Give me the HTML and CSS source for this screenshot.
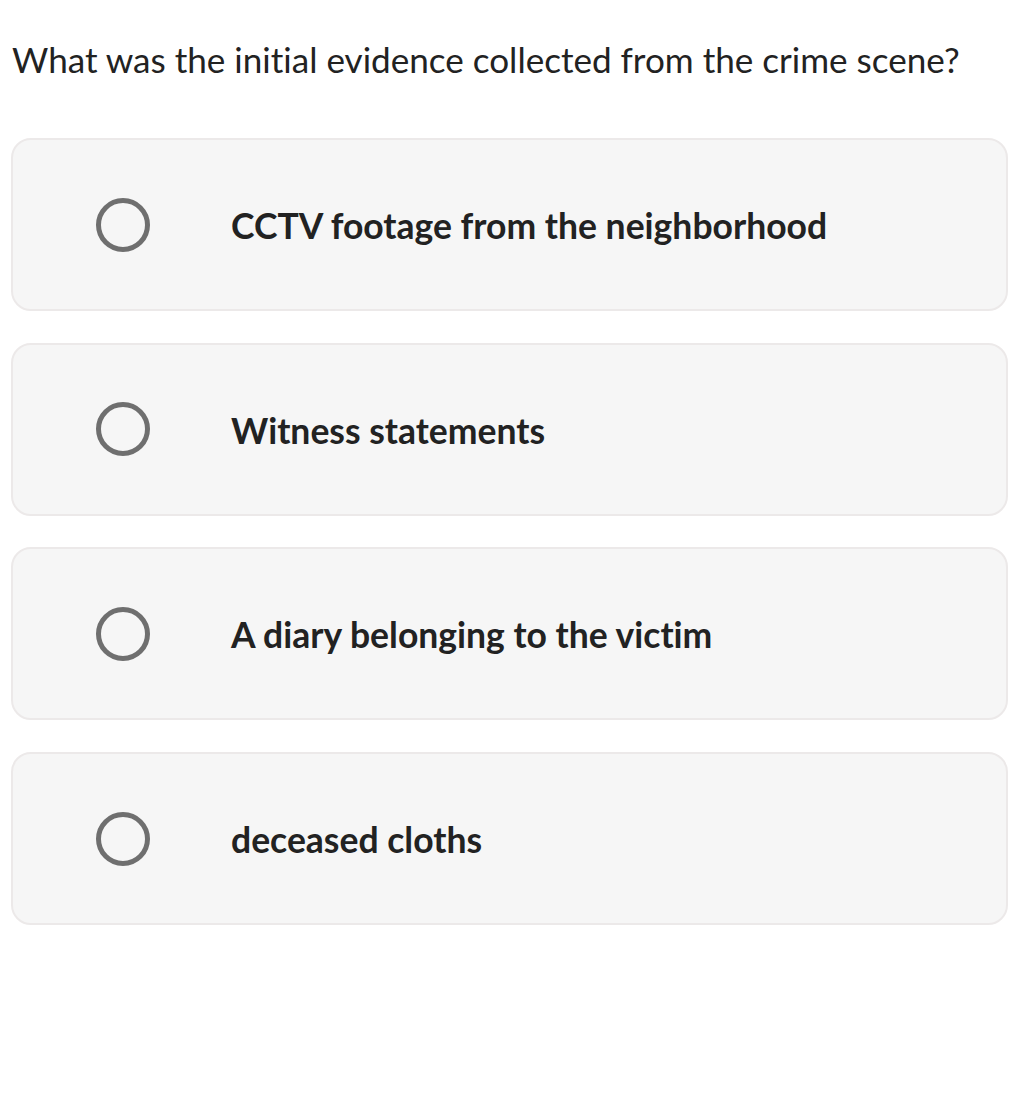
FILE: index.html
```html
<!DOCTYPE html>
<html lang="en">
<head>
  <meta charset="UTF-8">
  <title>Question</title>
  <link rel="stylesheet" href="styles.css">
</head>
<body>
  <main class="quiz">
    <h1 class="question">What was the initial evidence collected from the crime scene?</h1>

    <div class="options">
      <label class="option">
        <span class="radio"></span>
        <span class="option-text">CCTV footage from the neighborhood</span>
      </label>
      <label class="option">
        <span class="radio"></span>
        <span class="option-text">Witness statements</span>
      </label>
      <label class="option">
        <span class="radio"></span>
        <span class="option-text">A diary belonging to the victim</span>
      </label>
      <label class="option">
        <span class="radio"></span>
        <span class="option-text">deceased cloths</span>
      </label>
    </div>
  </main>
</body>
</html>
```

FILE: styles.css
```css
* {
  box-sizing: border-box;
}

body {
  margin: 0;
  background-color: #ffffff;
  color: #222222;
  font-family: Lato, "Noto Sans", sans-serif;
  font-variant-ligatures: none;
}

.quiz {
  padding: 35px 20px 0 11px;
}

.question {
  margin: 0 0 0 1px;
  font-size: 35.1px;
  font-weight: 400;
  line-height: 48px;
}

.options {
  display: flex;
  flex-direction: column;
  gap: 31.7px;
  margin-top: 55px;
}

.option {
  display: flex;
  align-items: center;
  height: 173px;
  padding-left: 83px;
  border: 2px solid #ece9e9;
  border-radius: 20px;
  background-color: #f6f6f6;
  cursor: pointer;
}

.radio {
  flex: none;
  width: 54px;
  height: 54px;
  border: 5px solid #6f6f6f;
  border-radius: 50%;
}

.option-text {
  margin-left: 81px;
  padding-top: 2px;
  font-size: 35.5px;
  font-weight: 700;
}
```
